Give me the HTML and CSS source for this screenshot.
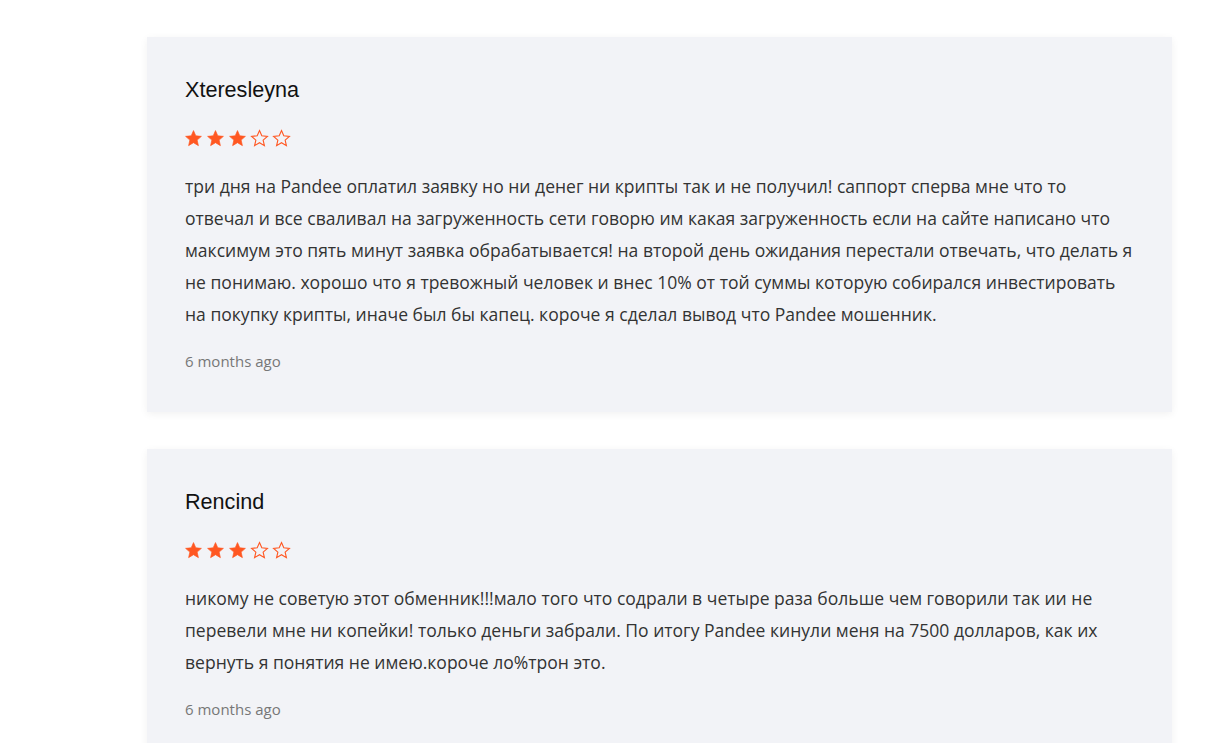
FILE: index.html
```html
<!DOCTYPE html>
<html lang="ru">
<head>
<meta charset="utf-8">
<title>Reviews</title>
<link rel="stylesheet" href="styles.css">
</head>
<body>
<div class="reviews">
  <div class="card">
    <div class="name">Xteresleyna</div>
    <div class="stars">
      <svg class="star full" viewBox="0 0 24 24"><polygon points="12,2 14.9,8.6 22,9.3 16.6,14 18.2,21 12,17.3 5.8,21 7.4,14 2,9.3 9.1,8.6"/></svg>
      <svg class="star full" viewBox="0 0 24 24"><polygon points="12,2 14.9,8.6 22,9.3 16.6,14 18.2,21 12,17.3 5.8,21 7.4,14 2,9.3 9.1,8.6"/></svg>
      <svg class="star full" viewBox="0 0 24 24"><polygon points="12,2 14.9,8.6 22,9.3 16.6,14 18.2,21 12,17.3 5.8,21 7.4,14 2,9.3 9.1,8.6"/></svg>
      <svg class="star empty" viewBox="0 0 24 24"><polygon points="12,2 14.9,8.6 22,9.3 16.6,14 18.2,21 12,17.3 5.8,21 7.4,14 2,9.3 9.1,8.6"/></svg>
      <svg class="star empty" viewBox="0 0 24 24"><polygon points="12,2 14.9,8.6 22,9.3 16.6,14 18.2,21 12,17.3 5.8,21 7.4,14 2,9.3 9.1,8.6"/></svg>
    </div>
    <p class="text">три дня на Pandee оплатил заявку но ни денег ни крипты так и не получил! саппорт сперва мне что то отвечал и все сваливал на загруженность сети говорю им какая загруженность если на сайте написано что максимум это пять минут заявка обрабатывается! на второй день ожидания перестали отвечать, что делать я не понимаю. хорошо что я тревожный человек и внес 10% от той суммы которую собирался инвестировать на покупку крипты, иначе был бы капец. короче я сделал вывод что Pandee мошенник.</p>
    <div class="date">6 months ago</div>
  </div>
  <div class="card">
    <div class="name">Rencind</div>
    <div class="stars">
      <svg class="star full" viewBox="0 0 24 24"><polygon points="12,2 14.9,8.6 22,9.3 16.6,14 18.2,21 12,17.3 5.8,21 7.4,14 2,9.3 9.1,8.6"/></svg>
      <svg class="star full" viewBox="0 0 24 24"><polygon points="12,2 14.9,8.6 22,9.3 16.6,14 18.2,21 12,17.3 5.8,21 7.4,14 2,9.3 9.1,8.6"/></svg>
      <svg class="star full" viewBox="0 0 24 24"><polygon points="12,2 14.9,8.6 22,9.3 16.6,14 18.2,21 12,17.3 5.8,21 7.4,14 2,9.3 9.1,8.6"/></svg>
      <svg class="star empty" viewBox="0 0 24 24"><polygon points="12,2 14.9,8.6 22,9.3 16.6,14 18.2,21 12,17.3 5.8,21 7.4,14 2,9.3 9.1,8.6"/></svg>
      <svg class="star empty" viewBox="0 0 24 24"><polygon points="12,2 14.9,8.6 22,9.3 16.6,14 18.2,21 12,17.3 5.8,21 7.4,14 2,9.3 9.1,8.6"/></svg>
    </div>
    <p class="text">никому не советую этот обменник!!!мало того что содрали в четыре раза больше чем говорили так ии не перевели мне ни копейки! только деньги забрали. По итогу Pandee кинули меня на 7500 долларов, как их вернуть я понятия не имею.короче ло%трон это.</p>
    <div class="date">6 months ago</div>
  </div>
</div>
</body>
</html>
```

FILE: styles.css
```css
html, body {
  margin: 0;
  padding: 0;
  background: #ffffff;
}

.reviews {
  display: flex;
  flex-direction: column;
  gap: 37px;
  padding: 37px 39px 0 147px;
}

.card {
  background: #f2f3f7;
  box-shadow: 0 2px 8px rgba(0, 0, 0, 0.06);
  padding: 40px 38px 41px 38px;
}

.name {
  font-family: "Liberation Sans", Arial, sans-serif;
  font-size: 21.6px;
  line-height: 26px;
  color: #111111;
}

.stars {
  display: flex;
  gap: 3px;
  margin-top: 25px;
  height: 20px;
  margin-left: -1px;
  align-items: center;
}

.star {
  width: 19px;
  height: 19px;
  display: block;
}

.star polygon {
  stroke-linejoin: miter;
}

.star.full polygon {
  fill: #ff5722;
  stroke: #ff5722;
  stroke-width: 0.8;
}

.star.empty polygon {
  fill: none;
  stroke: #ff5722;
  stroke-width: 1.4;
}

.text {
  margin: 22px 0 0 0;
  font-family: "Open Sans", sans-serif;
  font-size: 17.55px;
  line-height: 32px;
  color: #333333;
}

.date {
  margin-top: 21px;
  font-family: "Open Sans", sans-serif;
  font-size: 15px;
  line-height: 20px;
  color: #777777;
}
```
